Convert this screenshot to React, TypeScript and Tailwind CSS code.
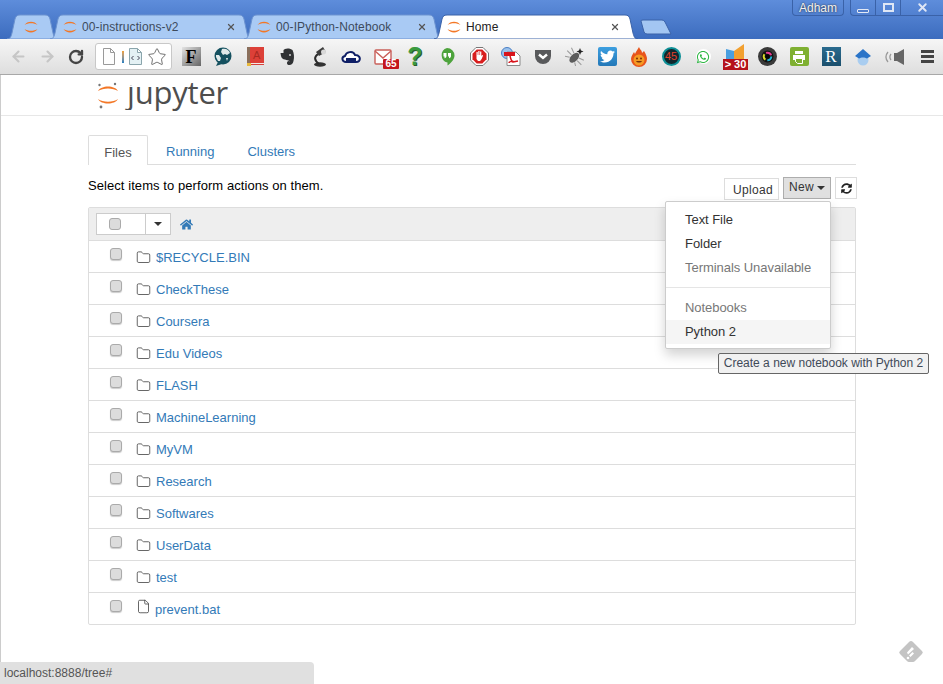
import React from 'react';
import { ArrowLeft, ArrowRight, RotateCw, Star, Folder, File, X } from 'lucide-react';
import { FaHome, FaSyncAlt, FaTwitter, FaWhatsapp } from 'react-icons/fa';

const folders = ['$RECYCLE.BIN', 'CheckThese', 'Coursera', 'Edu Videos', 'FLASH', 'MachineLearning', 'MyVM', 'Research', 'Softwares', 'UserData', 'test'];

function Spinner() {
  return (
    <svg width="16" height="16" viewBox="0 0 16 16" className="shrink-0">
      <path d="M1.500 6 C4 1.500 12 1.500 14.500 6 C11 3.600 5 3.600 1.500 6Z" fill="#f37726" />
      <path d="M1.500 10 C4 14.500 12 14.500 14.500 10 C11 12.400 5 12.400 1.500 10Z" fill="#f37726" />
    </svg>
  );
}

type TabProps = { width: number; left: number; right?: number; title?: string; active?: boolean };

function Tab({ width, left, right = 16, title, active }: TabProps) {
  const w = width;
  return (
    <div className="relative h-[25px] shrink-0 -mr-[8px]" style={{ width, zIndex: active ? 5 : 1 }}>
      <svg width={w} height={25} className="absolute inset-0">
        <path
          d={`M0 25 C3 25 4 23 5 19 L8 5 C9 2 10 1 13 1 L${w - 13} 1 C${w - 10} 1 ${w - 9} 2 ${w - 8} 5 L${w - 5} 19 C${w - 4} 23 ${w - 3} 25 ${w} 25 Z`}
          fill={active ? '#ffffff' : '#a9caf4'}
          stroke={active ? '#3a62a8' : '#6c93d0'}
        />
      </svg>
      <div className="relative flex h-full items-center gap-[4px]" style={{ paddingLeft: left, paddingRight: right }}>
        <Spinner />
        {title && <span className={`flex-1 truncate text-[12px] tracking-[0.1px] ${active ? 'text-[#222]' : 'text-[#3d4a5c]'}`}>{title}</span>}
        {title && <X size={10} strokeWidth={3} className="text-[#555]" />}
      </div>
    </div>
  );
}

function Badge({ children, className }: { children: React.ReactNode; className: string }) {
  return <span className={`flex items-center justify-center text-center font-bold leading-none ${className}`}>{children}</span>;
}

function Slot({ children }: { children: React.ReactNode }) {
  return <div className="relative flex h-[22px] w-[32px] shrink-0 items-center justify-center">{children}</div>;
}

function ExtensionIcons() {
  return (
    <div className="flex items-center pl-[3px]">
      <Slot><Badge className="h-[19px] w-[19px] bg-gradient-to-br from-[#e4e4e4] to-[#666] font-['Liberation_Serif'] text-[18px] text-black">F</Badge></Slot>
      <Slot>
        <svg width="20" height="20" viewBox="0 0 20 20">
          <circle cx="10" cy="9" r="8.500" fill="#14505f" />
          <path d="M9 2c4-1 7 1 8 4l-3 2-2-1-2 1-2-3z M3 8l3 0 2 3-1 3-2 0-2-4z M13 11l2 0-1 3z" fill="#dfe9ea" />
          <path d="M5 15l-2 4 6-2z" fill="#14505f" />
        </svg>
      </Slot>
      <Slot>
        <svg width="17" height="20" viewBox="0 0 17 20">
          <rect x="2" width="15" height="16" fill="#dc4038" />
          <rect width="3" height="18" fill="#8a6f5c" />
          <rect x="3" y="16" width="14" height="1" fill="#f4e9e6" />
          <rect x="3" y="17" width="14" height="1" fill="#d6423c" />
          <rect y="16" width="4" height="3" fill="#e8b93c" />
          <text x="6" y="12" fontSize="11" fill="#a82a22" fontFamily="Liberation Sans">A</text>
        </svg>
      </Slot>
      <Slot>
        <svg width="15" height="18" viewBox="0 0 15 18">
          <path d="M3.500 2 L5 1 C7 0 11 0.500 12.500 2 C14 5 14.500 9 13.500 13 C13 16 11 17.500 8.500 17 C6.500 16.500 6.500 13.500 8.500 13 L10 13.500 C9 12 6.500 12.500 5 11.500 C3 11.500 1.500 10 1 8 L0.500 5 L3.500 5 Z" fill="#303234" />
          <circle cx="10" cy="7" r="1" fill="#cfcfcf" />
        </svg>
      </Slot>
      <Slot>
        <svg width="16" height="21" viewBox="0 0 16 21">
          <ellipse cx="9" cy="18.500" rx="6" ry="2.200" fill="#333" />
          <path d="M8 18 C3 14 3 11 7 8" fill="none" stroke="#2a2a2a" strokeWidth="2" />
          <path d="M5 6 L12 1 L15 6 L8 10 Z" fill="#3c3c3c" />
          <circle cx="12.500" cy="6" r="2.500" fill="#d8d8d8" />
        </svg>
      </Slot>
      <Slot>
        <svg width="20" height="13" viewBox="0 0 20 13">
          <path d="M5 12 C1 12 0 7 4 6 C5 2 12 0 14 5 C18 5 20 8 18 11 C17 12 16 12 15 12Z" fill="#fff" stroke="#0f1f66" strokeWidth="2" />
          <rect x="5" y="8" width="10" height="3.500" fill="#0f1f66" />
        </svg>
      </Slot>
      <Slot>
        <svg width="18" height="16" viewBox="0 0 18 16">
          <rect x="1" y="1" width="16" height="14" rx="1" fill="#fff" stroke="#c9605a" strokeWidth="1.400" />
          <path d="M1 2 L9 9 L17 2" fill="none" stroke="#c9605a" strokeWidth="1.400" />
        </svg>
        <Badge className="absolute left-[16px] top-[13px] h-[10px] w-[16px] rounded-[1px] bg-[#c4161c] text-[10px] text-white">65</Badge>
      </Slot>
      <Slot><span className="font-['Liberation_Sans'] text-[25px] font-bold leading-none text-[#3a9a3f] [text-shadow:1px_1px_0_#2a5a2a]">?</span></Slot>
      <Slot>
        <svg width="16" height="19" viewBox="0 0 16 19">
          <path d="M8 1a7.500 7.500 0 0 1 7.500 7.500c0 4-4 8-7 10v-3A7.500 7.500 0 0 1 8 1z" fill="#4da33c" />
          <path d="M4.500 6h3v3c0 1.500-1 2-2 2.200V9.500h-1z M9 6h3v3c0 1.500-1 2-2 2.200V9.500H9z" fill="#fff" />
        </svg>
      </Slot>
      <Slot>
        <svg width="19" height="19" viewBox="0 0 19 19">
          <path d="M6 .5h7l5.500 5.500v7L13 18.500H6L.5 13V6z" fill="#fff" stroke="#777" />
          <path d="M6.700 2.500h5.600l4.200 4.200v5.600l-4.200 4.200H6.700l-4.200-4.200V6.700z" fill="#d81e1e" />
          <path d="M6.500 9V5h1.200v3h.6V4h1.200v4h.6V4.500h1.200V9l1-1 .8.500-1.500 3.500-1.500 2H8l-1.500-2z" fill="#fff" />
        </svg>
      </Slot>
      <Slot>
        <svg width="20" height="19" viewBox="0 0 20 19">
          <circle cx="6" cy="6" r="5.500" fill="#9cc2ec" stroke="#4a7fc4" />
          <path d="M6 5h9l4 4v9.500H6z" fill="#fff" stroke="#8a8a8a" />
          <rect x="3" y="5" width="11" height="4" fill="#d8141c" />
          <path d="M9 9c1 4 2 6 3 6 2-1-4-1-4 1M12 15l5-1" fill="none" stroke="#d8141c" strokeWidth="1.500" />
        </svg>
      </Slot>
      <Slot>
        <svg width="18" height="16" viewBox="0 0 18 16">
          <path d="M1 1h16v6a8 8 0 0 1-16 0z" fill="#58595b" />
          <path d="M5 5.500l4 3.500 4-3.500" fill="none" stroke="#fff" strokeWidth="2.400" />
        </svg>
      </Slot>
      <Slot>
        <svg width="20" height="19" viewBox="0 0 20 19">
          <g transform="rotate(45 10 10)">
            <ellipse cx="10" cy="11" rx="3.500" ry="6" fill="#5c5c5c" />
            <path d="M6.500 8 L1 6 M6 11H0 M6.500 14l-5 3 M13.500 8l5-2 M14 11h6 M13.500 14l5 3" stroke="#999" />
          </g>
          <path d="M15 1l1 2.500 2.500 1-2.500 1-1 2.500-1-2.500-2.500-1 2.500-1z" fill="#222" />
        </svg>
      </Slot>
      <Slot>
        <div className="flex h-[19px] w-[19px] items-center justify-center rounded-[2px] bg-gradient-to-b from-[#3d9fe0] to-[#2378b8]"><FaTwitter size={15} className="text-white" /></div>
      </Slot>
      <Slot>
        <svg width="16" height="20" viewBox="0 0 16 20">
          <path d="M8 0c1 3 3 3 3 6l2-2c2 3 3 6 3 8a8 8 0 0 1-16 0c0-3 2-5 3-7l1 2c1-3 3-5 4-7z" fill="#e8541b" />
          <circle cx="8" cy="13" r="5.500" fill="#f59a23" />
          <path d="M5 14c1 2 5 2 6 0z" fill="#7a3208" />
          <circle cx="6" cy="11.500" r="1" fill="#7a3208" />
          <circle cx="10" cy="11.500" r="1" fill="#7a3208" />
        </svg>
      </Slot>
      <Slot>
        <Badge className="h-[19px] w-[19px] rounded-full border-2 border-[#0d8f96] bg-[#10282e] text-[11px] font-normal text-[#e0402a]">45</Badge>
      </Slot>
      <Slot>
        <div className="flex h-[15px] w-[15px] items-center justify-center rounded-full bg-white"><FaWhatsapp size={14} className="text-[#2cb642]" /></div>
      </Slot>
      <Slot>
        <svg width="18" height="18" viewBox="0 0 18 18" className="-mt-[8px]">
          <path d="M0 5l8 2v11H0z" fill="#4a9fe0" />
          <path d="M8 7l10-7v18H8z" fill="#f2a030" />
        </svg>
        <Badge className="absolute left-[4px] top-[13px] h-[11px] w-[25px] bg-[#b5121b] text-[11px] text-white">&gt; 30</Badge>
      </Slot>
      <Slot>
        <svg width="19" height="19" viewBox="0 0 19 19">
          <circle cx="9.500" cy="9.500" r="9.500" fill="#3a3a3a" />
          <circle cx="9.500" cy="9.500" r="6" fill="#111" />
          <circle cx="9.500" cy="9.500" r="3.800" fill="none" stroke="#22b8d8" strokeWidth="2" strokeDasharray="6 18" />
          <circle cx="9.500" cy="9.500" r="3.800" fill="none" stroke="#e53a8f" strokeWidth="2" strokeDasharray="6 18" strokeDashoffset="8" />
          <circle cx="9.500" cy="9.500" r="3.800" fill="none" stroke="#d8d82a" strokeWidth="2" strokeDasharray="6 18" strokeDashoffset="16" />
          <circle cx="9.500" cy="9.500" r="2" fill="#050505" />
        </svg>
      </Slot>
      <Slot>
        <div className="flex h-[19px] w-[19px] items-center justify-center rounded-[2px] bg-[#7fb032]">
          <svg width="14" height="14" viewBox="0 0 14 14">
            <rect x="3" y="1" width="8" height="3" fill="#fff" />
            <rect x="1" y="5" width="12" height="5" fill="#fff" />
            <path d="M3.500 8.500h7v5h-5l-2-2z" fill="#7fb032" stroke="#fff" />
          </svg>
        </div>
      </Slot>
      <Slot><Badge className="h-[19px] w-[19px] bg-gradient-to-b from-[#2a6b8e] to-[#1b4f6d] font-['Liberation_Serif'] text-[17px] font-normal text-white">R</Badge></Slot>
      <Slot>
        <svg width="18" height="18" viewBox="0 0 18 18">
          <circle cx="9" cy="12" r="5.500" fill="#a9cdf0" />
          <path d="M9 1l8 7-4 2.500c-2-1.500-6-1.500-8 0l-4-2.500z" fill="#2a74c8" />
        </svg>
      </Slot>
      <Slot>
        <svg width="20" height="16" viewBox="0 0 20 16">
          <path d="M9 4h3l7-4v16l-7-4H9z" fill="#666" />
          <path d="M6 5c-1.500 2-1.500 4 0 6 M3 3c-2.500 3-2.500 7 0 10" fill="none" stroke="#999" strokeWidth="1.300" />
        </svg>
      </Slot>
      <Slot>
        <div className="flex w-[13px] flex-col gap-[2px]">
          <span className="h-[3px] bg-[#444]" />
          <span className="h-[3px] bg-[#444]" />
          <span className="h-[3px] bg-[#444]" />
        </div>
      </Slot>
    </div>
  );
}

function Row({ name, file }: { name: string; file?: boolean }) {
  return (
    <div className="flex h-[32px] items-start border-t border-[#ddd]">
      <span className="ml-[21px] mt-[7px] h-[12px] w-[12px] rounded-[3px] border border-[#aaa] bg-[#dcdcdc] shadow-[0_1px_1px_#ccc]" />
      {file ? (
        <File size={15} strokeWidth={1.300} className="ml-[14px] mt-[6px] text-[#444]" />
      ) : (
        <Folder size={15} strokeWidth={1.300} className="ml-[14px] mt-[9px] text-[#444]" />
      )}
      <a className={`${file ? 'ml-[4px]' : 'ml-[5px]'} mt-[9px] text-[13px] leading-[16px] text-[#337ab7]`}>{name}</a>
    </div>
  );
}

export default function App() {
  return (
    <div className="relative flex h-[684px] w-[943px] flex-col overflow-hidden bg-white font-['Liberation_Sans',sans-serif]">
      {/* window title bar with browser tabs */}
      <div className="relative h-[39px] shrink-0 bg-gradient-to-b from-[#5e8ddb] to-[#3c6cbe]">
        <div className="absolute bottom-0 left-[7px] flex">
          <Tab width={51} left={16} />
          <Tab width={202} left={12} title="00-instructions-v2" />
          <Tab width={198} left={12} right={15} title="00-IPython-Notebook" />
          <Tab width={204} left={12} right={18} title="Home" active />
          <svg width="32" height="16" className="ml-[10px] mt-[5px]">
            <path d="M1 2 Q1 1 3 1 H22 Q24 1 25 3 L31 15 H7 Q5 15 4 13Z" fill="#a3c6f2" stroke="#3a62a8" />
          </svg>
        </div>
        <div className="absolute right-0 top-0 flex items-start gap-[6px]">
          <div className="flex h-[16px] w-[52px] items-center justify-center rounded-b-[4px] border border-t-0 border-[#3a62a8] text-[12px] text-[#f2f2f2] [text-shadow:0_0_2px_#222]">Adham</div>
          <div className="flex h-[16px] w-[93px] rounded-bl-[4px] border border-t-0 border-r-0 border-[#3a62a8]">
            <div className="flex w-[25px] items-end justify-center border-r border-[#3a62a8] pb-[2px]"><span className="h-[4px] w-[12px] rounded-[1px] border border-[#e3e9f5] bg-[#4f7ccb]" /></div>
            <div className="flex w-[25px] items-center justify-center border-r border-[#3a62a8]"><span className="h-[9px] w-[11px] border-2 border-[#dfe7f5]" /></div>
            <div className="flex flex-1 items-center justify-center"><X size={13} strokeWidth={3.500} className="text-[#dfe7f5]" /></div>
          </div>
        </div>
      </div>

      {/* browser toolbar */}
      <div className="flex h-[36px] shrink-0 items-center border-b border-[#a8a8a8] bg-gradient-to-b from-[#f6f6f6] to-[#dedede] pl-[10px]">
        <ArrowLeft size={17} strokeWidth={3} className="text-[#c6c6c6]" />
        <ArrowRight size={17} strokeWidth={3} className="ml-[12px] text-[#c6c6c6]" />
        <RotateCw size={16} strokeWidth={3.500} className="ml-[12px] text-[#444]" />
        <div className="ml-[11px] flex h-[27px] w-[77px] items-center rounded-[3px] border border-[#c8c8c8] bg-white pl-[7px]">
          <svg width="12" height="17" viewBox="0 0 12 17"><path d="M.5.500h7l4 4v12H.5z M7.500.500v4h4" fill="#fdfdfd" stroke="#999" /></svg>
          <span className="ml-[7px] h-[12px] w-[2px] bg-gradient-to-b from-[#f2a030] to-[#1f7fc0]" />
          <svg width="13" height="17" viewBox="0 0 13 17" className="ml-[5px]">
            <path d="M.5.500h8l4 4v12H.5z M8.500.500v4h4" fill="#e4f1f4" stroke="#8aa5ac" />
            <path d="M4.500 8l-2 2 2 2 M8.500 8l2 2-2 2" fill="none" stroke="#445" />
          </svg>
          <Star size={20} strokeWidth={1} className="ml-[5px] text-[#555]" />
        </div>
        <ExtensionIcons />
      </div>

      {/* page */}
      <div className="relative flex-1 border-l border-[#ccc]">
        <div className="flex h-[41px] items-start border-b border-[#e7e7e7] pl-[97px]">
          <svg width="20" height="27" viewBox="0 0 20 27" className="mt-[7px]">
            <path d="M0 9 C3 3 17 3 20 9 C15 5.500 5 5.500 0 9Z" fill="#f37726" />
            <path d="M0 17 C3 23 17 23 20 17 C15 20.500 5 20.500 0 17Z" fill="#f37726" />
            <circle cx="17" cy="2" r="1.200" fill="#767677" />
            <circle cx="1.500" cy="3" r="1.200" fill="#767677" />
            <circle cx="3" cy="25" r="1.400" fill="#767677" />
          </svg>
          <span className="ml-[9px] mt-[-1px] font-['Open_Sans'] text-[31px] leading-[36px] tracking-[-0.2px] text-[#4e4e4e]">
            <span className="inline-block [clip-path:inset(11px_-4px_0_-8px)]">j</span>upyter
          </span>
        </div>

        <div className="ml-[87px] w-[768px]">
          {/* tabs */}
          <div className="mt-[19px] flex h-[30px] border-b border-[#ddd] text-[13px]">
            <div className="h-[30px] w-[60px] rounded-t-[2px] border border-b-0 border-[#ddd] bg-white pt-[7px] text-center text-[#555]">Files</div>
            <div className="pl-[18px] pt-[7px] text-[#337ab7]">Running</div>
            <div className="pl-[33px] pt-[7px] text-[#337ab7]">Clusters</div>
          </div>

          {/* action row */}
          <div className="flex h-[42px] items-start">
            <span className="mt-[13px] text-[13px] leading-[15px] tracking-[0.07px] text-black">Select items to perform actions on them.</span>
            <div className="ml-auto mr-[-1px] mt-[12px] flex gap-[4px] text-[12px] tracking-[0.3px]">
              <button className="mt-[1px] h-[22px] w-[55px] border border-[#ddd] bg-white pl-[3px] pt-[1px] text-[#333]">Upload</button>
              <button className="flex h-[22px] w-[48px] items-center justify-center gap-[3px] border border-[#adadad] bg-[#e0e0e0] pb-[2px] text-[#333]">
                New <span className="mt-[2px] border-x-[4px] border-t-[4px] border-x-transparent border-t-[#333]" />
              </button>
              <button className="flex h-[22px] w-[22px] items-center justify-center border border-[#ddd] bg-white"><FaSyncAlt size={11} className="text-[#222]" /></button>
            </div>
          </div>

          {/* file list */}
          <div className="rounded-[2px] border border-[#ddd]">
            <div className="flex h-[32px] items-center bg-[#eee] pl-[7px]">
              <div className="flex h-[22px] w-[75px] border border-[#ccc] bg-white">
                <div className="flex w-[49px] items-center border-r border-[#ccc] pl-[12px]">
                  <span className="h-[12px] w-[12px] rounded-[3px] border border-[#aaa] bg-[#dcdcdc]" />
                </div>
                <div className="flex flex-1 items-center justify-center"><span className="border-x-[4px] border-t-[4px] border-x-transparent border-t-[#333]" /></div>
              </div>
              <FaHome size={13} className="ml-[9px] text-[#337ab7]" />
            </div>
            {folders.map((f) => <Row key={f} name={f} />)}
            <Row name="prevent.bat" file />
          </div>
        </div>

        {/* open dropdown */}
        <div className="absolute left-[664px] top-[126px] h-[148px] w-[166px] rounded-[2px] border border-[#ccc] bg-white py-[6px] text-[13px] tracking-[-0.05px] shadow-[0_6px_12px_rgba(0,0,0,0.175)]">
          <div className="h-[24px] pl-[19px] leading-[24px] text-[#333]">Text File</div>
          <div className="h-[24px] pl-[19px] leading-[24px] text-[#333]">Folder</div>
          <div className="h-[24px] pl-[19px] leading-[24px] text-[#777]">Terminals Unavailable</div>
          <div className="mb-[8px] mt-[7px] h-px bg-[#e5e5e5]" />
          <div className="h-[24px] pl-[19px] leading-[24px] text-[#777]">Notebooks</div>
          <div className="h-[24px] bg-[#f5f5f5] pl-[19px] leading-[24px] text-[#333]">Python 2</div>
        </div>

        {/* tooltip */}
        <div className="absolute left-[717px] top-[278px] h-[21px] w-[211px] rounded-[2px] border border-[#666] bg-[#f1f1f1] text-center text-[12px] leading-[19px] text-[#3f4a58]">Create a new notebook with Python 2</div>

        {/* feedly */}
        <svg width="26" height="24" viewBox="0 0 26 24" className="absolute left-[897px] top-[565px]">
          <path d="M11 2 a3 3 0 0 1 4 0 L24 11 a2 2 0 0 1 0 3 L17 21 a3 3 0 0 1 -2 1 H11 a3 3 0 0 1 -2 -1 L2 14 a2 2 0 0 1 0 -3 Z" fill="#c4c4c4" />
          <path d="M14 7 L16 9 L10 14.500 L9 12.500 Z M14.500 12 L16 13.500 L12.500 17 L11 15.500 Z" fill="#fff" />
          <circle cx="10" cy="18" r="1.300" fill="#fff" />
        </svg>

        {/* status bubble */}
        <div className="absolute bottom-0 left-[-1px] flex h-[22px] w-[314px] items-center rounded-tr-[4px] bg-[#e0e0e0] pl-[4px] text-[12px] text-[#555]">localhost:8888/tree#</div>
      </div>
    </div>
  );
}
